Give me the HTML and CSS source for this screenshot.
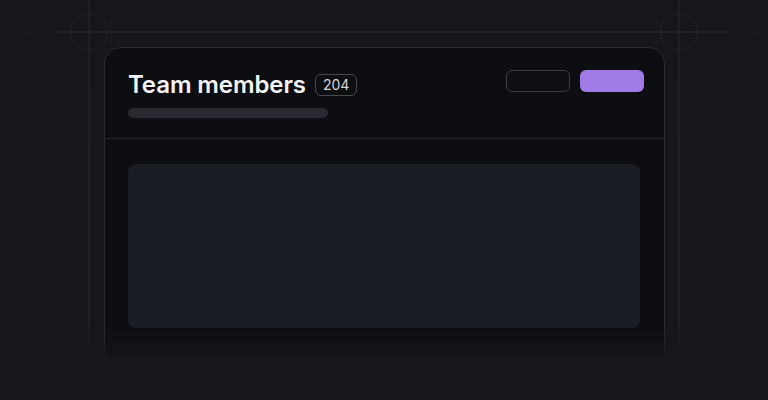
FILE: index.html
```html
<!DOCTYPE html>
<html>
<head>
<meta charset="utf-8">
<link rel="stylesheet" href="styles.css">
</head>
<body>
<svg class="guides" width="768" height="400" viewBox="0 0 768 400">
  <defs>
    <linearGradient id="hfade" x1="0" x2="1" y1="0" y2="0">
      <stop offset="0" stop-color="#2a2c31" stop-opacity="0"/>
      <stop offset="0.08" stop-color="#2a2c31" stop-opacity="1"/>
      <stop offset="0.92" stop-color="#2a2c31" stop-opacity="1"/>
      <stop offset="1" stop-color="#2a2c31" stop-opacity="0"/>
    </linearGradient>
    <linearGradient id="vfade" x1="0" x2="0" y1="0" y2="1">
      <stop offset="0" stop-color="#24262b" stop-opacity="1"/>
      <stop offset="0.85" stop-color="#2c2e33" stop-opacity="1"/>
      <stop offset="1" stop-color="#2c2e33" stop-opacity="0"/>
    </linearGradient>
  </defs>
  <rect x="16" y="31.5" width="752" height="1" fill="url(#hfade)"/>
  <rect x="88.5" y="0" width="1" height="360" fill="url(#vfade)"/>
  <rect x="678.5" y="0" width="1" height="360" fill="url(#vfade)"/>
  <circle cx="89" cy="32" r="18.5" fill="none" stroke="#22242a" stroke-width="1"/>
  <circle cx="679" cy="32" r="18.5" fill="none" stroke="#22242a" stroke-width="1"/>
</svg>
<main class="stage">
  <section class="card">
    <header class="card-head">
      <div class="head-left">
        <div class="title-row">
          <h1 class="title">Team members</h1>
          <span class="badge">204</span>
        </div>
        <div class="skeleton-bar"></div>
      </div>
      <div class="actions">
        <span class="btn btn-outline"></span>
        <span class="btn btn-primary"></span>
      </div>
    </header>
    <div class="card-body">
      <div class="panel"></div>
    </div>
  </section>
</main>
<div class="fade"></div>
</body>
</html>
```
FILE: styles.css
```css
html, body {
  margin: 0;
  padding: 0;
}
body {
  width: 768px;
  height: 400px;
  overflow: hidden;
  background: #15171b;
  font-family: Inter, "Noto Sans", sans-serif;
  position: relative;
}
.guides {
  position: absolute;
  left: 0;
  top: 0;
}
.stage {
  position: relative;
  padding: 47px 0 0 104px;
}
.card {
  width: 559px;
  height: 320px;
  background: #0d0e11;
  border: 1px solid #2a2c31;
  border-radius: 16px;
  box-sizing: content-box;
}
.card-head {
  display: flex;
  justify-content: space-between;
  align-items: flex-start;
  padding: 22px 20px 20px 23px;
  border-bottom: 1px solid #26282d;
}
.head-left {
  display: flex;
  flex-direction: column;
  gap: 8px;
}
.title-row {
  display: flex;
  align-items: center;
  gap: 9px;
  height: 30px;
}
.title {
  margin: 0;
  font-size: 24px;
  font-weight: 600;
  color: #f4f4f6;
  letter-spacing: -0.1px;
  line-height: 30px;
}
.badge {
  display: inline-flex;
  align-items: center;
  justify-content: center;
  height: 20px;
  padding: 0 7px;
  border: 1px solid #46484e;
  border-radius: 6px;
  font-size: 14px;
  color: #d4d5d9;
  margin-top: -1px;
}
.skeleton-bar {
  width: 200px;
  height: 10px;
  border-radius: 5px;
  background: #2a2b32;
}
.actions {
  display: flex;
  gap: 10px;
  padding-top: 0;
}
.btn {
  display: block;
  width: 64px;
  height: 22px;
  border-radius: 6px;
  box-sizing: border-box;
}
.btn-outline {
  border: 1px solid #3a3c41;
  background: #0f1013;
}
.btn-primary {
  background: #a17ce9;
}
.card-body {
  padding: 25px 24px 24px 23px;
}
.panel {
  height: 164px;
  border-radius: 8px;
  background: #1b1d24;
}
.fade {
  position: absolute;
  left: 0;
  top: 328px;
  width: 768px;
  height: 72px;
  background: linear-gradient(to bottom, rgba(21,23,27,0) 0px, rgba(21,23,27,0.3) 14px, rgba(21,23,27,0.9) 28px, #15171b 36px);
}
```
